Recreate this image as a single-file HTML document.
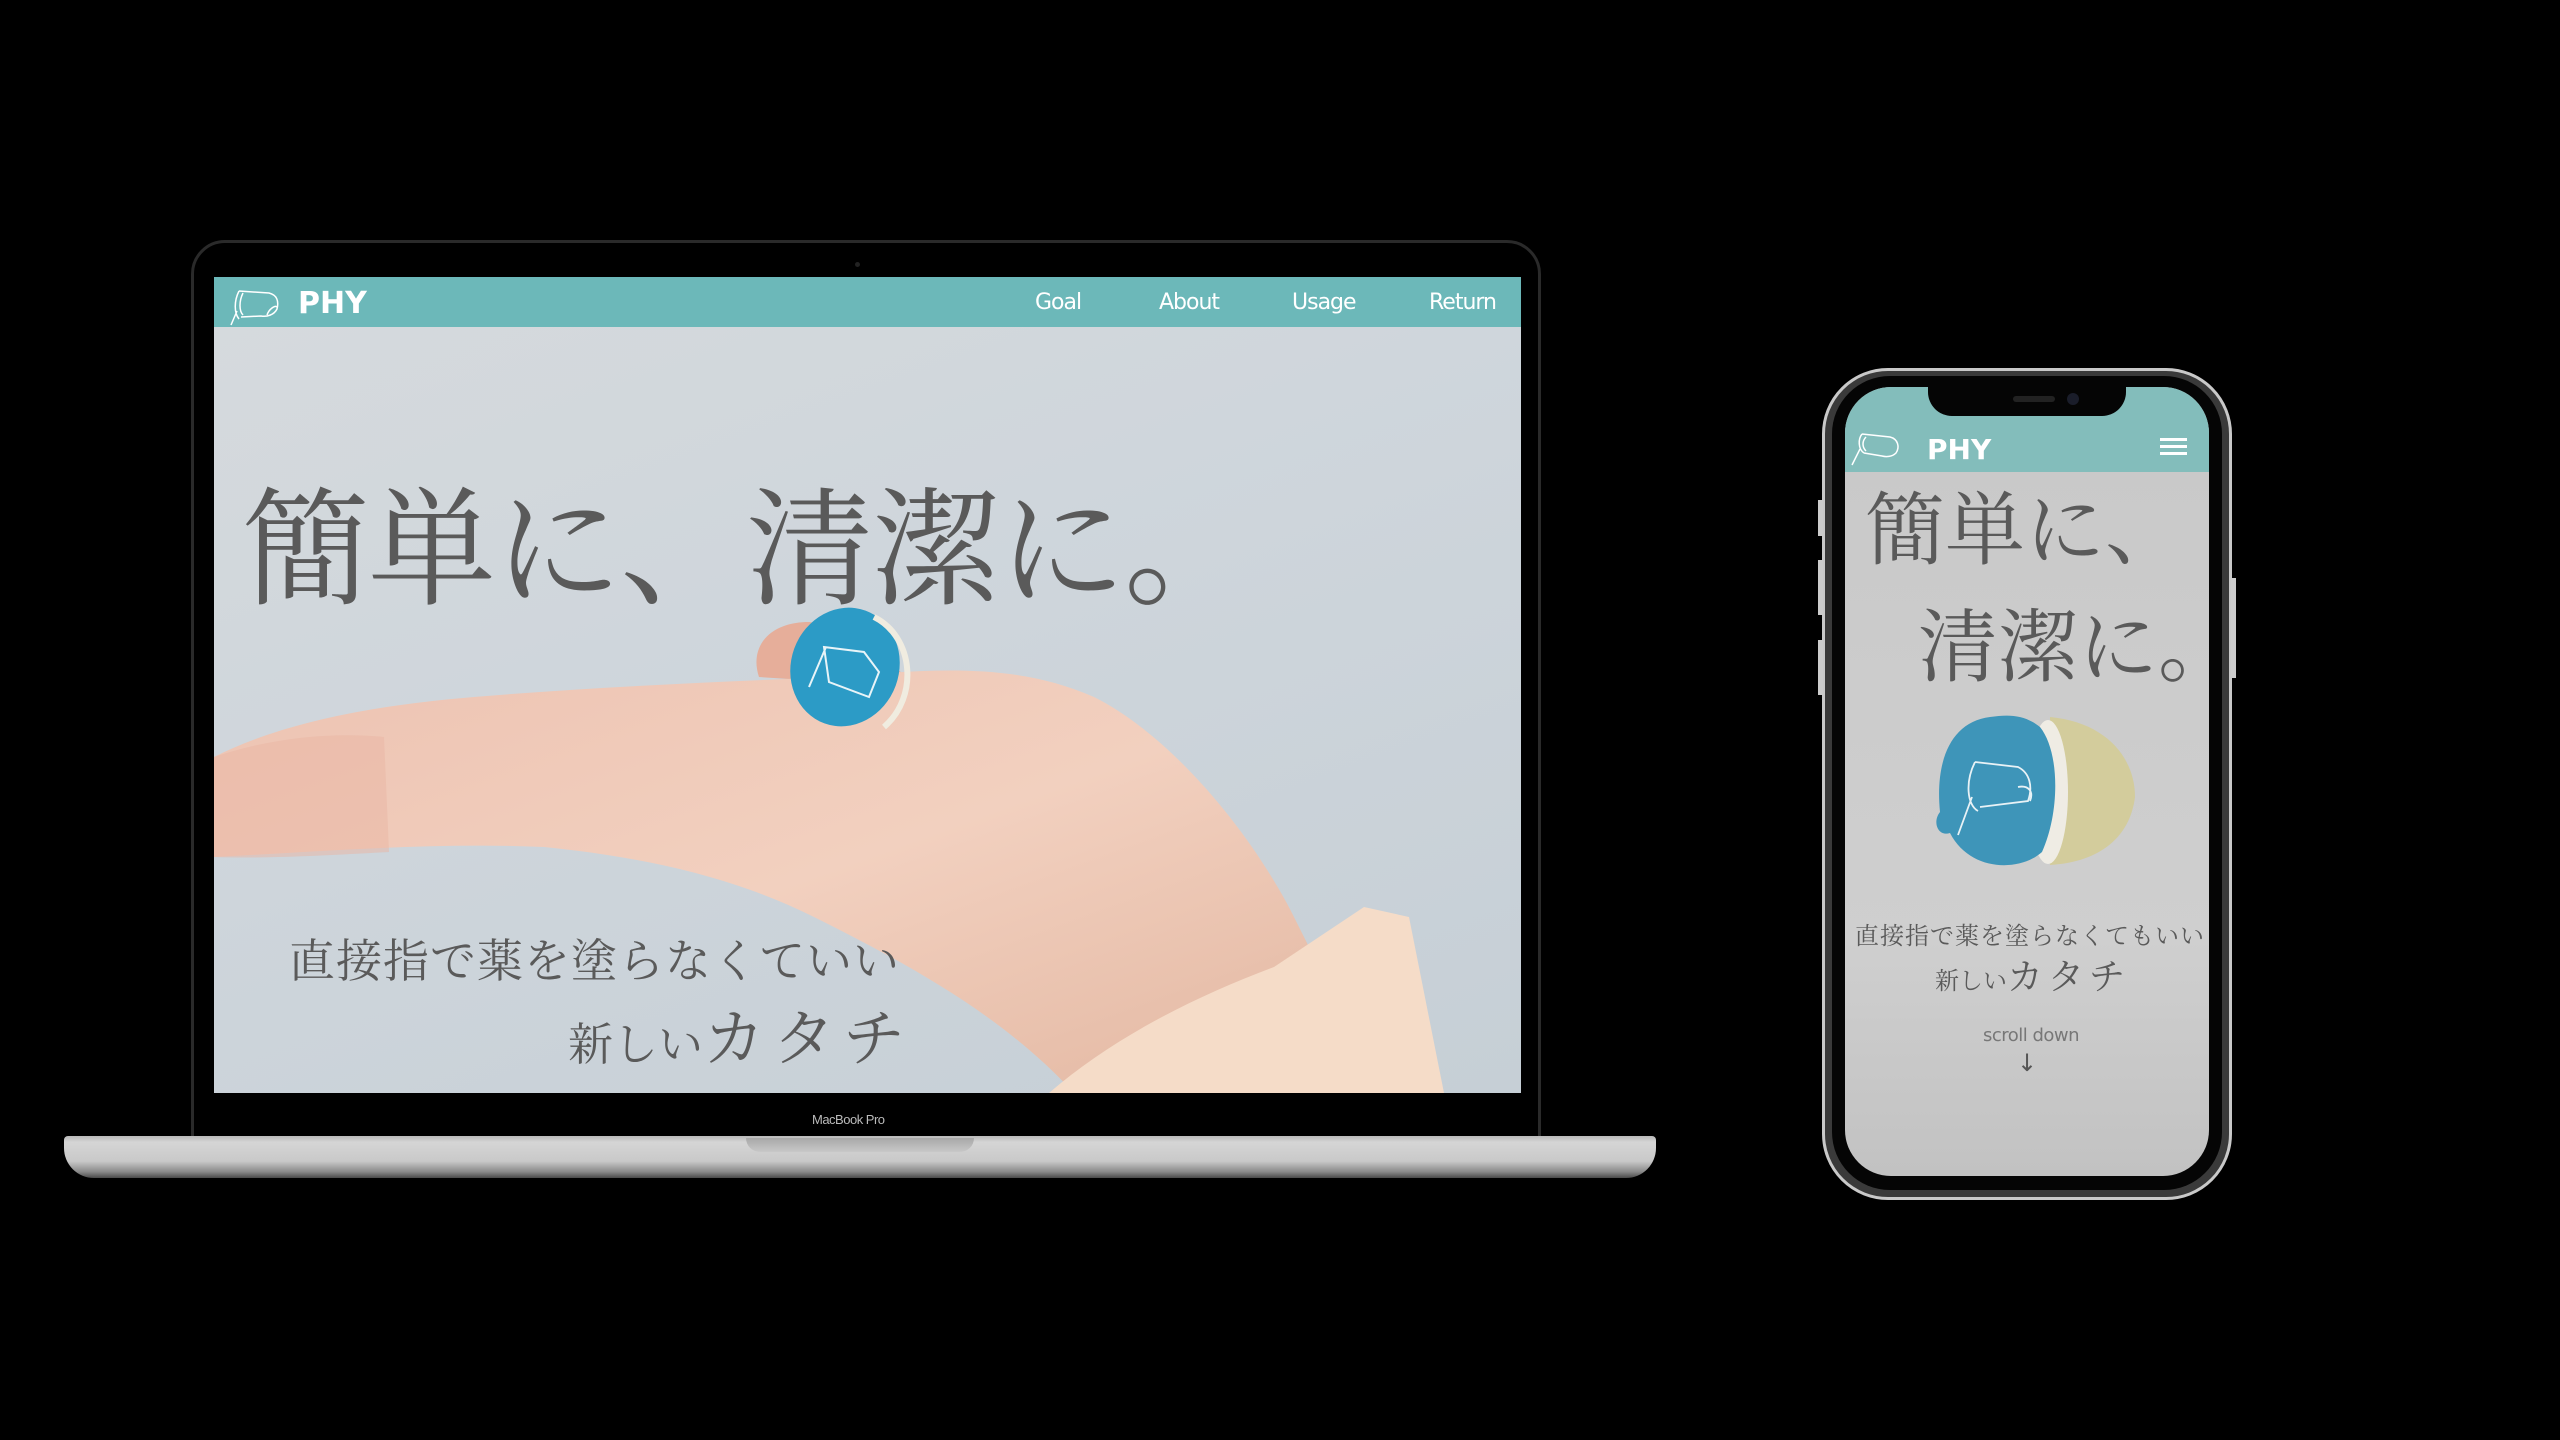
<!DOCTYPE html>
<html><head><meta charset="utf-8"><style>
*{margin:0;padding:0;box-sizing:border-box}
body{width:2560px;height:1440px;background:#000;position:relative;overflow:hidden;font-family:"Liberation Sans",sans-serif}
.abs{position:absolute}
.serif{font-family:"Liberation Serif","Noto Serif CJK JP","Noto Serif CJK SC",serif;color:#5a5a5a;white-space:nowrap}
</style></head><body>
<div class="abs" style="left:191px;top:240px;width:1350px;height:905px;background:#000;border:3px solid #2a2a2a;border-radius:34px 34px 0 0"></div>
<div class="abs" style="left:855px;top:262px;width:5px;height:5px;border-radius:50%;background:#222"></div>
<div class="abs" style="left:214px;top:277px;width:1307px;height:816px;overflow:hidden;background:linear-gradient(160deg,#d6dadd 0%,#cfd6dc 40%,#c6cfd6 100%)">
<svg width="1307" height="816" style="position:absolute;left:0;top:0">
<defs>
<linearGradient id="sk" x1="0" y1="0" x2="1" y2="1"><stop offset="0" stop-color="#edc3b2"/><stop offset="0.5" stop-color="#f2d0bf"/><stop offset="1" stop-color="#e2b6a0"/></linearGradient>
</defs>
<path d="M545,400 C535,370 555,345 595,345 C640,350 680,385 700,410 Z" fill="#e6ae9a"/>
<path d="M0,480 C60,450 140,430 260,420 C380,410 500,405 620,400 C720,392 800,385 880,420 C960,460 1040,560 1080,640 C1110,700 1140,760 1160,816 L860,816 C790,740 700,690 600,640 C520,600 430,580 330,570 C220,565 100,575 0,580 Z" fill="url(#sk)"/>
<path d="M0,480 C60,460 120,455 170,460 L175,575 C120,578 50,582 0,580 Z" fill="#eab5a4" opacity=".5"/>
<path d="M1150,630 L1195,640 L1230,816 L835,816 C900,760 980,720 1060,690 Z" fill="#f5dcc8"/>
<ellipse cx="631" cy="390" rx="54" ry="60" transform="rotate(20 631 390)" fill="#2c9bc6"/>
<path d="M660,340 C700,360 705,420 670,450" stroke="#f0ece0" stroke-width="6" fill="none"/>
<path d="M610,370 L650,375 L665,395 L655,420 L615,405 Z M612,370 L595,410" stroke="#e8f4f8" stroke-width="2" fill="none"/>
</svg>
<div class="abs" style="left:0;top:0;width:1307px;height:50px;background:#6cb8b9"></div>
<svg class="abs" style="left:15px;top:4px" width="60" height="46"><g stroke="#fff" stroke-width="1.5" fill="none"><path d="M10,10 C5,20 5,32 10,38 M10,10 L40,12 C48,14 50,20 48,28 C45,34 38,36 32,35 L12,36 M14,12 C10,20 10,30 14,34 M8,30 L2,44 M38,34 C40,28 46,24 48,26"/></g></svg>
<div class="abs" style="left:84px;top:9px;font:bold 30px 'DejaVu Sans',sans-serif;color:#fff">PHY</div>
<div class="abs" style="left:821px;top:13px;font:22px 'DejaVu Sans',sans-serif;color:#fff;letter-spacing:-1px">Goal</div>
<div class="abs" style="left:945px;top:13px;font:22px 'DejaVu Sans',sans-serif;color:#fff;letter-spacing:-1px">About</div>
<div class="abs" style="left:1078px;top:13px;font:22px 'DejaVu Sans',sans-serif;color:#fff;letter-spacing:-1px">Usage</div>
<div class="abs" style="left:1215px;top:13px;font:22px 'DejaVu Sans',sans-serif;color:#fff;letter-spacing:-1px">Return</div>
<div class="abs serif" style="left:28px;top:210px;font-size:128px;line-height:1;letter-spacing:-2px">簡単に、清潔に。</div>
<div class="abs serif" style="left:75px;top:662px;font-size:46px;line-height:1;letter-spacing:1px">直接指で薬を塗らなくていい</div>
<div class="abs serif" style="left:354px;top:732px;font-size:45px;line-height:1">新しい<span style="font-size:62px;letter-spacing:8px">カタチ</span></div>
</div>
<div class="abs" style="left:812px;top:1112px;font:13px 'Liberation Sans',sans-serif;color:#bbb;letter-spacing:-.5px">MacBook Pro</div>
<div class="abs" style="left:64px;top:1136px;width:1592px;height:42px;border-radius:4px 4px 30px 30px;background:linear-gradient(#b9b9b9 0%,#d5d5d5 15%,#c9c9c9 60%,#8a8a8a 85%,#4a4a4a 100%)"></div>
<div class="abs" style="left:746px;top:1138px;width:228px;height:14px;border-radius:0 0 14px 14px;background:linear-gradient(#a8a8a8,#c8c8c8)"></div>
<div class="abs" style="left:1822px;top:368px;width:410px;height:832px;border-radius:66px;background:#3a3a3a;border:3px solid #c9c9c9"></div>
<div class="abs" style="left:1818px;top:500px;width:5px;height:36px;background:#ccc"></div>
<div class="abs" style="left:1818px;top:560px;width:5px;height:55px;background:#ccc"></div>
<div class="abs" style="left:1818px;top:640px;width:5px;height:55px;background:#ccc"></div>
<div class="abs" style="left:2231px;top:578px;width:5px;height:100px;background:#ccc"></div>
<div class="abs" style="left:1832px;top:376px;width:390px;height:814px;border-radius:58px;background:#050505"></div>
<div class="abs" style="left:1845px;top:387px;width:364px;height:789px;border-radius:46px;overflow:hidden;background:linear-gradient(#c8c8c8,#cfcfcf 70%,#c2c2c2)">
<div class="abs" style="left:0;top:0;width:364px;height:85px;background:#83bdbb"></div>
<div class="abs" style="left:83px;top:0;width:198px;height:29px;background:#050505;border-radius:0 0 24px 24px"></div>
<div class="abs" style="left:168px;top:9px;width:42px;height:6px;border-radius:3px;background:#222"></div>
<div class="abs" style="left:222px;top:6px;width:12px;height:12px;border-radius:50%;background:#1a1d2a"></div>
<svg class="abs" style="left:5px;top:42px" width="60" height="40"><g stroke="#fff" stroke-width="1.5" fill="none"><path d="M12,5 L40,8 C48,10 50,18 46,24 C42,28 36,28 32,27 L14,24 M12,5 C8,10 8,20 14,24 M16,8 C12,12 12,18 16,22 M10,20 L2,36"/></g></svg>
<div class="abs" style="left:82px;top:46px;font:bold 28px 'DejaVu Sans',sans-serif;color:#fff">PHY</div>
<div class="abs" style="left:315px;top:51px;width:27px;height:3px;background:#fff;box-shadow:0 7px 0 #fff,0 14px 0 #fff"></div>
<div class="abs serif" style="left:20px;top:105px;font-size:80px;line-height:1">簡単に、</div>
<div class="abs serif" style="left:73px;top:222px;font-size:80px;line-height:1">清潔に。</div>
<svg class="abs" style="left:85px;top:300px" width="220" height="200">
<path d="M120,30 C175,35 205,70 205,110 C200,150 170,175 120,178 Z" fill="#d3cc9c"/>
<ellipse cx="118" cy="105" rx="20" ry="72" fill="#efece4"/>
<path d="M60,30 C20,35 5,75 10,125 C2,135 8,150 20,146 C40,185 90,185 112,165 C130,125 130,65 110,40 C95,28 80,27 60,30 Z" fill="#3e95b9"/>
<g stroke="#e8f2f6" stroke-width="1.8" fill="none"><path d="M45,75 C35,95 37,118 48,124 M45,75 L88,80 C100,86 103,100 98,114 L50,120 M88,100 C98,98 104,104 100,114 M42,110 L28,148"/></g>
</svg>
<div class="abs serif" style="left:10px;top:538px;font-size:24px;line-height:1;letter-spacing:1px">直接指で薬を塗らなくてもいい</div>
<div class="abs serif" style="left:90px;top:572px;font-size:24px;line-height:1">新しい<span style="font-size:36px;letter-spacing:5px">カタチ</span></div>
<div class="abs" style="left:4px;width:364px;top:638px;text-align:center;font:18px 'DejaVu Sans',sans-serif;color:#777;letter-spacing:-.5px">scroll down</div>
<div class="abs" style="left:0;width:364px;top:662px;text-align:center;font:24px 'DejaVu Sans',sans-serif;color:#555">↓</div>
</div>
</body></html>
